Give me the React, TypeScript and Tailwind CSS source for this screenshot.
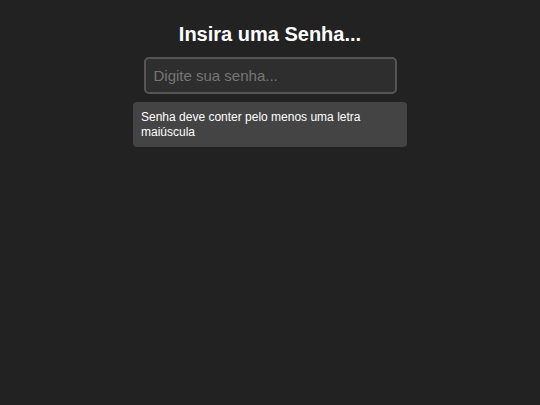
export default function App() {
  return (
    <div className="min-h-[405px] w-full bg-[#222222] flex flex-col items-center" style={{ fontFamily: '"Liberation Sans", Arial, sans-serif' }}>
      <h1 className="mt-[23px] text-[20px] leading-[23px] font-bold text-white">Insira uma Senha...</h1>
      <input
        type="password"
        placeholder="Digite sua senha..."
        className="mt-[11px] w-[253px] h-[37px] rounded-[5px] border-2 border-[#555555] bg-[#2e2e2e] px-[8px] text-[15px] text-white placeholder:text-[#767676] outline-none"
      />
      <div className="mt-[8px] w-[274px] rounded-[4px] bg-[#444444] px-[8px] pt-[8px] pb-[8px] text-[12px] leading-[14.5px] text-white">
        Senha deve conter pelo menos uma letra maiúscula
      </div>
    </div>
  );
}
